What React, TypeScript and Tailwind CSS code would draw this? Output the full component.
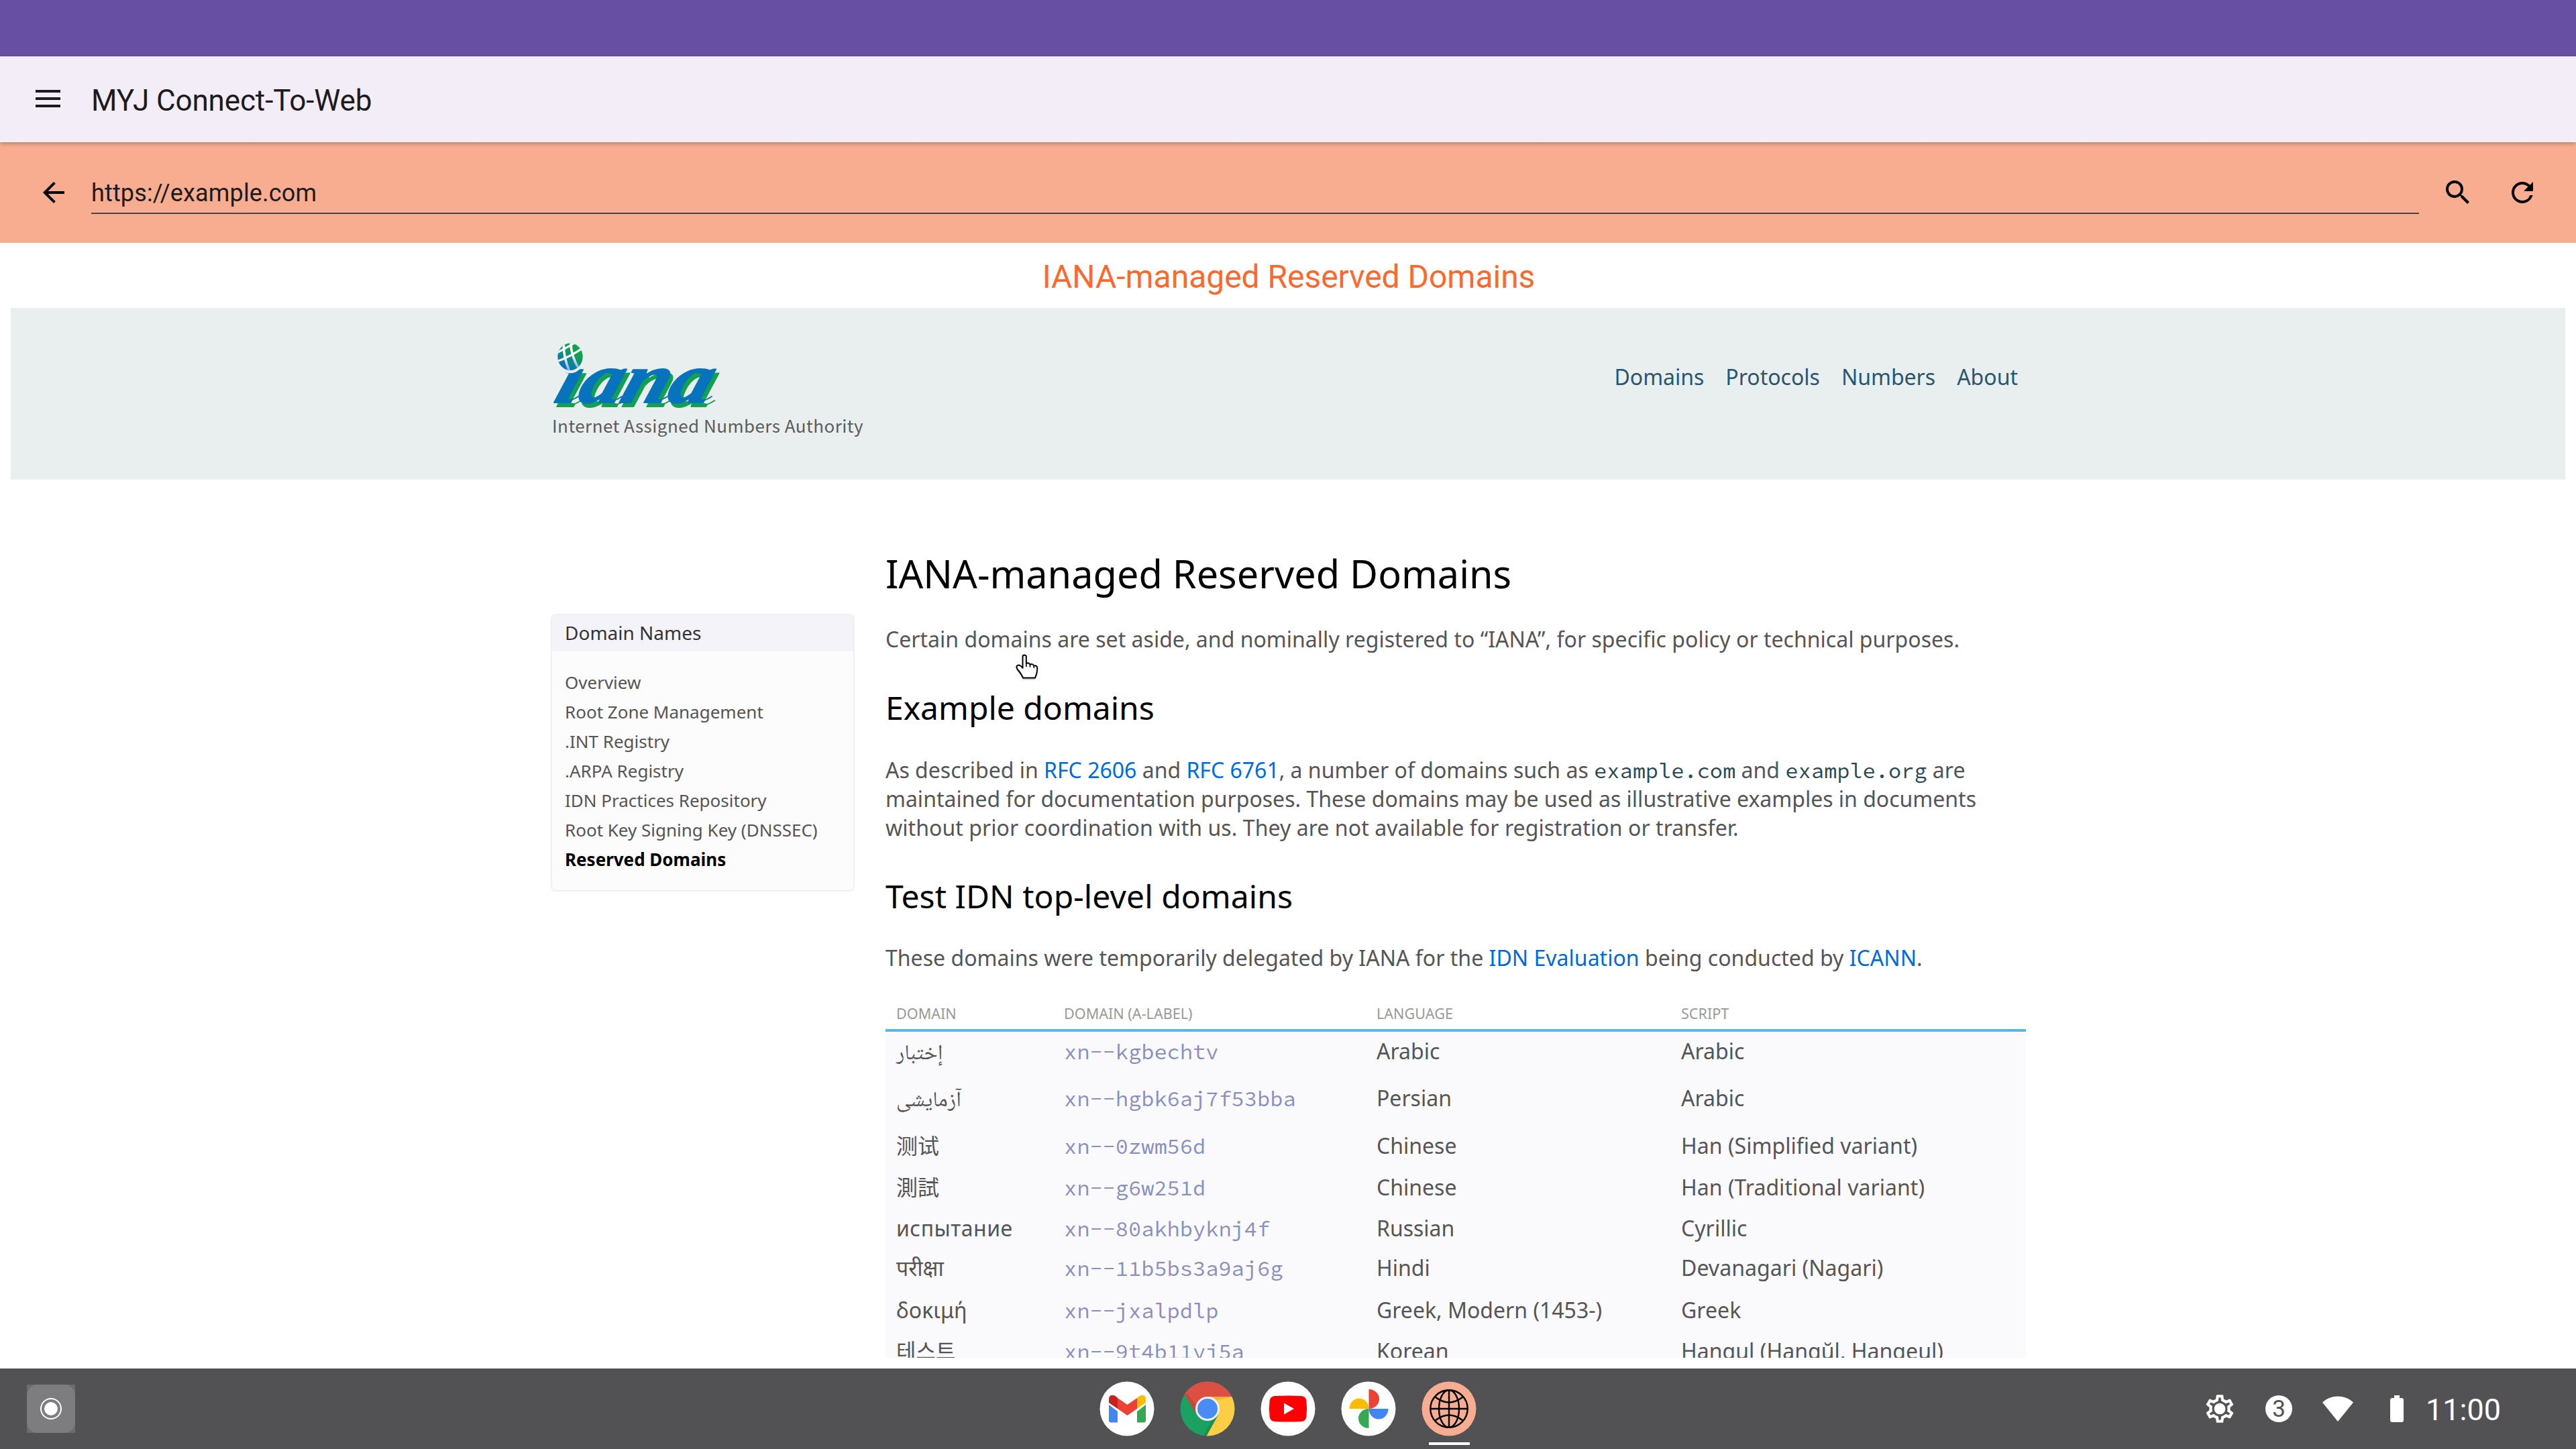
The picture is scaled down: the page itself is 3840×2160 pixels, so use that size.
import type { ReactNode } from "react";
import { MdArrowBack, MdOutlineSettings, MdRefresh, MdSearch } from "react-icons/md";

const NAV = ["Domains", "Protocols", "Numbers", "About"];

const SIDE_LINKS = [
  "Overview",
  "Root Zone Management",
  ".INT Registry",
  ".ARPA Registry",
  "IDN Practices Repository",
  "Root Key Signing Key (DNSSEC)",
];

type Row = { domain: string; label: string; language: string; script: string; height: string; font?: string };

const ROWS: Row[] = [
  { domain: "إختبار", label: "xn--kgbechtv", language: "Arabic", script: "Arabic", height: "h-[70px]", font: "font-['Noto_Naskh_Arabic','Noto_Sans',sans-serif]" },
  { domain: "آزمایشی", label: "xn--hgbk6aj7f53bba", language: "Persian", script: "Arabic", height: "h-[70px]", font: "font-['Noto_Naskh_Arabic','Noto_Sans',sans-serif]" },
  { domain: "测试", label: "xn--0zwm56d", language: "Chinese", script: "Han (Simplified variant)", height: "h-[62px]", font: "font-['Noto_Sans_CJK_SC',sans-serif]" },
  { domain: "測試", label: "xn--g6w251d", language: "Chinese", script: "Han (Traditional variant)", height: "h-[62px]", font: "font-['Noto_Sans_CJK_JP',sans-serif]" },
  { domain: "испытание", label: "xn--80akhbyknj4f", language: "Russian", script: "Cyrillic", height: "h-[59px]", font: "tracking-[0.5px]" },
  { domain: "परीक्षा", label: "xn--11b5bs3a9aj6g", language: "Hindi", script: "Devanagari (Nagari)", height: "h-[63px]" },
  { domain: "δοκιμή", label: "xn--jxalpdlp", language: "Greek, Modern (1453-)", script: "Greek", height: "h-[60px]" },
  { domain: "테스트", label: "xn--9t4b11yi5a", language: "Korean", script: "Hangul (Hangŭl, Hangeul)", height: "h-[62px]", font: "font-['Noto_Sans_CJK_KR',sans-serif]" },
];

function MenuIcon() {
  return (
    <div className="flex w-[37px] flex-col gap-[7px]">
      <div className="h-1 bg-[#1d1b20]" />
      <div className="h-1 bg-[#1d1b20]" />
      <div className="h-1 bg-[#1d1b20]" />
    </div>
  );
}

function IanaLogo() {
  const word = (fill: string) => (
    <g fill={fill} stroke={fill} clipPath="url(#belowDot)">
      <g transform="translate(3 100) skewX(-18)">
        <text
          x="0"
          y="0"
          fontFamily="'Liberation Serif', serif"
          fontStyle="italic"
          fontWeight="700"
          fontSize="106"
          textLength="231"
          lengthAdjust="spacingAndGlyphs"
          strokeWidth="2"
          strokeLinejoin="round"
        >
          iana
        </text>
      </g>
      <g fill="none" strokeWidth="2" strokeLinecap="round">
        <path d="M16 100 Q30 99 42 91" />
        <path d="M80 100 Q96 99 107 91" />
        <path d="M146 100 Q163 99 175 91" />
        <path d="M214 100 Q230 99 241 91" />
      </g>
    </g>
  );
  return (
    <svg className="block h-[110px] w-[260px] overflow-visible" viewBox="0 0 260 110">
      <defs>
        <linearGradient id="globe" x1="0.65" y1="0.35" x2="0.3" y2="0.85">
          <stop offset="0" stopColor="#12a24f" />
          <stop offset="1" stopColor="#0773bc" />
        </linearGradient>
        <linearGradient id="grid" x1="0" y1="0" x2="0" y2="1">
          <stop offset="0.45" stopColor="#ffffff" />
          <stop offset="1" stopColor="#7fa8d6" />
        </linearGradient>
        <clipPath id="globeClip">
          <ellipse cx="30" cy="31.8" rx="18.7" ry="20.2" />
        </clipPath>
        <clipPath id="belowDot">
          <rect x="-10" y="48.5" width="280" height="60" />
        </clipPath>
      </defs>
      <g transform="translate(4.3 6)">{word("#12a24f")}</g>
      {word("#0773bc")}
      <ellipse cx="30" cy="31.8" rx="22" ry="24.5" fill="#e9eeee" />
      <g clipPath="url(#globeClip)">
        <rect x="10" y="10" width="42" height="44" fill="url(#globe)" />
        <g fill="none" stroke="url(#grid)" strokeWidth="3.6">
          <path d="M20.5 10 Q19 30 29 54" />
          <path d="M31 9 Q30 28 43 50" />
        </g>
        <g fill="none" stroke="#ffffff" strokeWidth="3.2">
          <path d="M10 26 Q22 20 37 11" />
          <path d="M10 39 Q28 33 50 18" />
        </g>
      </g>
    </svg>
  );
}

function HandCursor() {
  return (
    <svg className="absolute left-[1512px] top-[974px] h-[46px] w-[40px]" viewBox="-2 -2 40 46">
      <path
        d="M10.5 3 Q10.5 0.5 13 0.5 Q15.8 0.5 15.8 3 V13 Q19.5 11 21.5 14.5 Q25.5 13 27.3 16.5 Q32 15.5 32.3 20 Q32.5 27 29 34.5 H11 Q8.5 28.5 2.5 21.5 Q0 17.5 3 15.8 Q6.5 14.5 10.5 20 Z"
        fill="#000000"
        opacity="0.18"
        transform="translate(0 3)"
      />
      <path
        d="M10.5 3 Q10.5 0.5 13 0.5 Q15.8 0.5 15.8 3 V13 Q19.5 11 21.5 14.5 Q25.5 13 27.3 16.5 Q32 15.5 32.3 20 Q32.5 27 29 34.5 H11 Q8.5 28.5 2.5 21.5 Q0 17.5 3 15.8 Q6.5 14.5 10.5 20 Z"
        fill="#ffffff"
        stroke="#000000"
        strokeWidth="2"
        strokeLinejoin="round"
      />
      <path d="M15.8 13 V18 M21.5 14.5 V18.5 M27.3 16.5 V20" stroke="#000000" strokeWidth="1.6" />
    </svg>
  );
}

function AppIcon({ bg, children }: { bg: string; children: ReactNode }) {
  return (
    <svg className="block size-[82px]" viewBox="-41 -41 82 82">
      <circle r="40.5" fill={bg} />
      {children}
    </svg>
  );
}

function Gmail() {
  return (
    <AppIcon bg="#ffffff">
      <path d="M-27 -6 L-14 4 V20.5 H-24 Q-27 20.5 -27 17.5 Z" fill="#4285f4" />
      <path d="M28 -6 L15 4 V20.5 H25 Q28 20.5 28 17.5 Z" fill="#34a853" />
      <path d="M-14 -16 L0.5 -6 L15 -16 V0 L0.5 10 L-14 0 Z" fill="#ea4335" />
      <path d="M-27 -9 V-14.5 C-27 -21 -20 -22.5 -14 -16 V0 L-27 -9 Z" fill="#c5221f" />
      <path d="M28 -9 V-14.5 C28 -21 21 -22.5 15 -16 V0 L28 -9 Z" fill="#fbbc04" />
    </AppIcon>
  );
}

function Chrome() {
  return (
    <AppIcon bg="#1ba261">
      <defs>
        <clipPath id="chromeClip">
          <circle r="40.5" />
        </clipPath>
      </defs>
      <g clipPath="url(#chromeClip)">
        <path d="M-45 -39 L-45 -45 H45 V-18 H0 L-16 9 L-33.5 -20.5 Z" fill="#dd4f43" />
        <path d="M0 -18 H45 V45 H-3.5 L-1.5 40.5 L16 9 Z" fill="#ffcd46" />
        <path d="M6 -18 H40 L14 -13 Z" fill="#e3a92b" opacity="0.6" />
        <path d="M16 9 L-1.5 40.5 L-6 40.5 L6 17 Z" fill="#11814b" opacity="0.5" />
        <path d="M-33.5 -20.5 L-31 -23 L-15 -3 L-16 9 Z" fill="#b53a30" opacity="0.45" />
      </g>
      <circle r="18" fill="#f1f1f1" />
      <circle r="15" fill="#4b8bf5" />
    </AppIcon>
  );
}

function YouTube() {
  return (
    <AppIcon bg="#ffffff">
      <path
        d="M-20 -19 Q0 -20.2 20 -19 Q26.5 -18.5 27.4 -12 Q28.9 0 27.4 12 Q26.5 18.5 20 19 Q0 20.2 -20 19 Q-26.5 18.5 -27.4 12 Q-28.9 0 -27.4 -12 Q-26.5 -18.5 -20 -19 Z"
        fill="#ff0000"
      />
      <path d="M-6 -8.4 L9 0 L-6 8.4 Z" fill="#ffffff" />
    </AppIcon>
  );
}

function Photos() {
  return (
    <AppIcon bg="#ffffff">
      <path d="M0.5 -29 A15.5 14.5 0 0 1 0.5 0 Z" fill="#ea4335" />
      <path d="M0.5 0 H29.5 A14.5 15.5 0 0 1 0.5 0 Z" fill="#4285f4" />
      <path d="M0.5 0 V29 A15.5 14.5 0 0 1 0.5 0 Z" fill="#34a853" />
      <path d="M0.5 0 H-28.5 A14.5 15.5 0 0 1 0.5 0 Z" fill="#fbbc04" />
    </AppIcon>
  );
}

function WebApp() {
  return (
    <div className="relative">
      <AppIcon bg="#f8ad90">
        <g fill="none" stroke="#000000" strokeWidth="2.4">
          <circle r="27.7" />
          <path d="M-27.7 0 H27.7 M0 -27.7 V27.7" />
          <ellipse rx="15" ry="27.7" />
          <path d="M-20.5 -17.5 Q0 -1.5 20.5 -17.5 M-20.5 17.5 Q0 1.5 20.5 17.5" />
        </g>
      </AppIcon>
      <div className="absolute left-[11px] top-[91px] h-1 w-[61px] bg-white" />
    </div>
  );
}

function Taskbar() {
  return (
    <footer className="grid h-[120px] grid-cols-3 items-center bg-[#525254]">
      <div className="pl-10">
        <div className="size-[72px] bg-[#6c6c6e]">
          <div className="flex size-[72px] items-center justify-center rounded-2xl bg-[#7d7d7f]">
            <div className="flex size-8 items-center justify-center rounded-full border-2 border-white">
              <div className="size-5 rounded-full bg-white" />
            </div>
          </div>
        </div>
      </div>
      <div className="flex items-center justify-center gap-[38px]">
        <Gmail />
        <Chrome />
        <YouTube />
        <Photos />
        <WebApp />
      </div>
      <div className="flex items-center pl-[724px] text-white">
        <div className="grid size-[50px] place-items-center">
          <MdOutlineSettings className="col-start-1 row-start-1 size-[50px]" />
          <div className="col-start-1 row-start-1 size-[15px] rounded-full bg-white" />
        </div>
        <div className="ml-[43px] flex size-10 items-center justify-center rounded-full bg-white font-['Roboto',sans-serif] text-[35px] leading-10 text-[#525254]">
          <span className="pt-[2px]">3</span>
        </div>
        <svg className="ml-[45px] h-[38px] w-[46px]" viewBox="0 0 46 38">
          <path d="M0 9.5 C13 -2.5 33 -2.5 46 9.5 L23 38 Z" fill="currentColor" />
        </svg>
        <svg className="ml-[55px] h-10 w-5" viewBox="0 0 20 40">
          <path d="M6 0 H14 V4 H17 Q20 4 20 7 V37 Q20 40 17 40 H3 Q0 40 0 37 V7 Q0 4 3 4 H6 Z" fill="currentColor" />
        </svg>
        <span className="ml-[33px] pt-[3px] font-['Roboto',sans-serif] text-[45px] leading-[60px]">11:00</span>
      </div>
    </footer>
  );
}

function SideMenu() {
  return (
    <aside className="ml-px mt-[200px] h-[414px] w-[453px] overflow-hidden rounded-lg border-2 border-[#f0f0f2] bg-[#fcfcfc] text-[26px] leading-[44px] text-[#555555]">
      <div className="h-[54px] bg-[#f4f3f9] pl-[19px] text-[28px] leading-[52px] text-[#333333]">Domain Names</div>
      <ul className="pl-[19px] pt-6">
        {SIDE_LINKS.map((t) => (
          <li key={t}>{t}</li>
        ))}
        <li className="font-bold text-black">Reserved Domains</li>
      </ul>
    </aside>
  );
}

function Link({ children }: { children: ReactNode }) {
  return <span className="text-[#006add]">{children}</span>;
}

function Code({ children }: { children: ReactNode }) {
  return <span className="font-['Source_Code_Pro','Liberation_Mono',monospace] leading-none tracking-normal text-[#2a4952]">{children}</span>;
}

function DomainTable() {
  return (
    <div className="mt-[47px]">
      <div className="grid h-[42px] grid-cols-[250px_466px_453px_1fr] border-b-4 border-[#5ab6e6] pl-4 text-[21.6px] leading-[29px] text-[#999999]">
        <span>DOMAIN</span>
        <span>DOMAIN (A-LABEL)</span>
        <span>LANGUAGE</span>
        <span className="pl-px">SCRIPT</span>
      </div>
      <div className="bg-[#fafafd] pl-4">
        {ROWS.map((r) => (
          <div key={r.label} className={`grid grid-cols-[250px_466px_453px_1fr] items-baseline pt-[7px] whitespace-nowrap ${r.height}`}>
            <span className={r.font}>{r.domain}</span>
            <span className="font-['Source_Code_Pro','Liberation_Mono',monospace] text-[#888fbd]">{r.label}</span>
            <span>{r.language}</span>
            <span className="pl-px tracking-[0.04px]">{r.script}</span>
          </div>
        ))}
      </div>
    </div>
  );
}

function WebPage() {
  return (
    <div className="mx-4 h-[1565px] overflow-hidden bg-white font-['Noto_Sans',sans-serif] text-[32px] leading-[43px] text-[#555555]">
      <header className="h-[256px] border-b-2 border-[#efeff1] bg-[#e9eeee]">
        <div className="mx-auto flex w-[2200px] justify-between">
          <div className="pt-[41px]">
            <IanaLogo />
            <div className="ml-[3px] mt-[6px] whitespace-nowrap font-['Noto_Sans_CJK_SC','Open_Sans',sans-serif] text-[26px] leading-9 tracking-[0.45px] text-[#5c5c5c]">
              Internet Assigned Numbers Authority
            </div>
          </div>
          <nav className="flex gap-8 pr-3 pt-[81px] text-[#2b566e]">
            {NAV.map((t) => (
              <span key={t}>{t}</span>
            ))}
          </nav>
        </div>
      </header>
      <div className="mx-auto flex w-[2200px]">
        <div className="w-[500px] shrink-0">
          <SideMenu />
        </div>
        <main className="w-[1700px] pt-[100px]">
          <h1 className="text-[57.6px] leading-[79px] text-black">IANA-managed Reserved Domains</h1>
          <p className="mt-[37px] whitespace-nowrap tracking-[0.02px]">
            Certain domains are set aside, and nominally registered to “IANA”, for specific policy or technical purposes.
          </p>
          <h2 className="mt-12 text-5xl leading-[65px] text-black">Example domains</h2>
          <p className="mt-[39px] whitespace-nowrap">
            As described in <Link>RFC 2606</Link> and <Link>RFC 6761</Link>, a number of domains such as <Code>example.com</Code> and{" "}
            <Code>example.org</Code> are
            <br />
            maintained for documentation purposes. These domains may be used as illustrative examples in documents
            <br />
            <span className="tracking-[0.065px]">without prior coordination with us. They are not available for registration or transfer.</span>
          </p>
          <h2 className="mt-12 text-5xl leading-[65px] tracking-[0.08px] text-black">Test IDN top-level domains</h2>
          <p className="mt-[38px] whitespace-nowrap tracking-[0.02px]">
            These domains were temporarily delegated by IANA for the <Link>IDN Evaluation</Link> being conducted by <Link>ICANN</Link>.
          </p>
          <DomainTable />
        </main>
      </div>
    </div>
  );
}

export default function App() {
  return (
    <div className="relative flex h-[2160px] w-[3840px] flex-col overflow-hidden bg-white">
      <div className="h-[84px] bg-[#6750a4]" />
      <div className="relative z-10 flex h-[128px] items-center bg-[#f3edf7] pl-[53px] shadow-[0_2px_6px_rgba(0,0,0,0.28)]">
        <div className="pb-[2px]">
          <MenuIcon />
        </div>
        <span className="ml-[46px] pt-1 font-['Roboto',sans-serif] text-[44px] leading-[60px] tracking-[-0.12px] text-[#1d1b20]">MYJ Connect-To-Web</span>
      </div>
      <div className="flex h-[150px] bg-[#f8ad90] text-black">
        <MdArrowBack className="ml-14 mt-[51px] size-12" />
        <div className="ml-8 mt-[45px] h-[62px] w-[3470px] border-b-2 border-[#49454f] font-['Roboto',sans-serif] text-[36px] leading-[62px] tracking-[0.15px] text-[#1d1b20]">
          https://example.com
        </div>
        <MdSearch className="ml-[34px] mt-[51px] size-12" />
        <MdRefresh className="ml-12 mt-[51px] size-12" />
      </div>
      <div className="h-[97px] pl-[2px] pt-[22px] text-center font-['Roboto',sans-serif] text-[48px] leading-[58px] tracking-[-0.03px] text-[#fa6a2e]">
        IANA-managed Reserved Domains
      </div>
      <WebPage />
      <div className="h-4 bg-white" />
      <Taskbar />
      <HandCursor />
    </div>
  );
}
